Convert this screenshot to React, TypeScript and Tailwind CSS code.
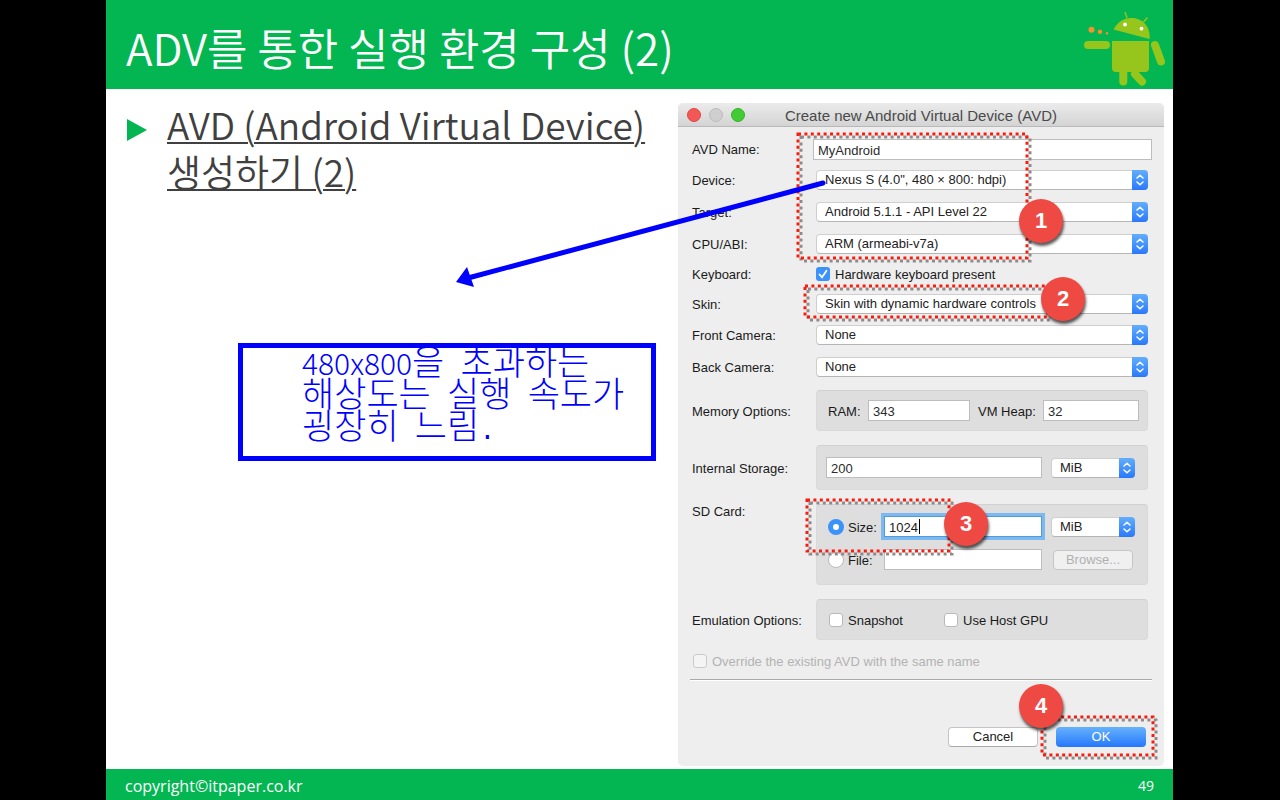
import { ReactNode } from 'react';

const field =
  'h-[21px] min-w-0 rounded-none border border-[#bdbcbe] bg-white px-1 pt-0.5 text-[13px] leading-4 text-[#2b2b2b] outline-none';

function Chevrons() {
  return (
    <span className="pointer-events-none col-start-1 row-start-1 flex h-5 w-4 items-center justify-center justify-self-end rounded-r-[4px] bg-linear-to-b from-[#62aefb] to-[#2a78fb]">
      <svg width="8" height="12" viewBox="0 0 8 12" fill="none" stroke="white" strokeWidth="1.5" strokeLinecap="round" strokeLinejoin="round">
        <path d="M1 4 4 1.2 7 4M1 8l3 2.8L7 8" />
      </svg>
    </span>
  );
}

function Select({ id, value, label, className = '' }: { id?: string; value: string; label?: string; className?: string }) {
  return (
    <span className={`grid grid-cols-1 ${className}`}>
      <select
        id={id}
        aria-label={label}
        className="col-start-1 row-start-1 h-5 w-full appearance-none rounded-[4px] border border-[#cfcfcf] border-b-[#b5b5b5] bg-white pl-2 text-[13px] leading-4 text-[#222] outline-none"
      >
        <option>{value}</option>
      </select>
      <Chevrons />
    </span>
  );
}

function SelectRow({ id, label, value, className = 'h-8' }: { id: string; label: string; value: string; className?: string }) {
  return (
    <div className={`grid grid-cols-[124px_minmax(0,1fr)] items-center ${className}`}>
      <label htmlFor={id} className="pt-0.5">{label}</label>
      <Select id={id} value={value} />
    </div>
  );
}

function PanelRow({ label, children, className }: { label: ReactNode; children: ReactNode; className: string }) {
  return (
    <div className="grid grid-cols-[124px_minmax(0,1fr)] items-center">
      <span className="pt-0.5">{label}</span>
      <div className={`flex items-center rounded-[4px] border border-[#dad8da] border-t-[#d2d0d2] bg-[#dedede] ${className}`}>{children}</div>
    </div>
  );
}

const box = 'size-[14px] shrink-0 appearance-none rounded-[3px] border border-[#b9b9b9] bg-white';

function Marker({ n, className }: { n: number; className: string }) {
  return (
    <span
      className={`absolute flex size-11 items-center justify-center rounded-full bg-[#ee4a43] text-[22px] font-bold text-white shadow-[1px_3px_3px_rgba(0,0,0,0.65)] ${className}`}
    >
      {n}
    </span>
  );
}

function Frames() {
  const frames = [
    'M120 31H349V155H120Z',
    'M127 183H370V214H127Z',
    'M129 397H271V448H129Z',
    'M364 614H475V652H364Z',
  ];
  return (
    <svg className="pointer-events-none absolute inset-0 size-full overflow-visible" fill="none" strokeWidth="3" strokeDasharray="3 3.4">
      {frames.map((d) => (
        <g key={d}>
          <path d={d} stroke="#8b8b8b" transform="translate(3 3)" />
          <path d={d} stroke="#fb1a0c" />
        </g>
      ))}
    </svg>
  );
}

function AvdDialog() {
  return (
    <form
      className="relative flex w-[486px] shrink-0 flex-col rounded-[5px] bg-[#eee] font-['Liberation_Sans',sans-serif] text-[13px] leading-4 text-[#1a1a1a]"
      onSubmit={(e) => e.preventDefault()}
    >
      <div className="flex h-6 shrink-0 items-center rounded-t-[5px] border-b border-[#b9b9b9] bg-linear-to-b from-[#ebebeb] to-[#d4d4d4] pl-[9px]">
        <div className="flex gap-2">
          <span className="size-[14px] rounded-full border border-[#df4744] bg-[#f25856]" />
          <span className="size-[14px] rounded-full border border-[#bdbdbd] bg-[#cfcfcf]" />
          <span className="size-[14px] rounded-full border border-[#38b22b] bg-[#43cb35]" />
        </div>
        <h2 className="flex-1 pt-0.5 pr-[67px] text-center text-[15px] text-[#4a4a4a]">Create new Android Virtual Device (AVD)</h2>
      </div>

      <div className="flex flex-1 flex-col pt-2 pr-4 pb-[19px] pl-[14px]">
        <div className="-mr-1 grid h-[29px] grid-cols-[121px_minmax(0,1fr)] items-center">
          <label htmlFor="name">AVD Name:</label>
          <input id="name" className={field} defaultValue="MyAndroid" />
        </div>
        <SelectRow id="device" label="Device:" value={'Nexus S (4.0", 480 × 800: hdpi)'} />
        <SelectRow id="target" label="Target:" value="Android 5.1.1 - API Level 22" />
        <SelectRow id="cpu" label="CPU/ABI:" value="ARM (armeabi-v7a)" />
        <div className="grid h-7 grid-cols-[124px_minmax(0,1fr)] items-center">
          <span className="pt-0.5">Keyboard:</span>
          <label className="flex items-center gap-[5px]">
            <span className="grid">
              <input type="checkbox" defaultChecked className="col-start-1 row-start-1 size-[14px] appearance-none rounded-[3px] bg-[#3b93fa]" />
              <svg className="pointer-events-none col-start-1 row-start-1" width="14" height="14" fill="none" stroke="white" strokeWidth="1.8" strokeLinecap="round">
                <path d="M3.5 7.5 6 10.2 10.5 3.8" />
              </svg>
            </span>
            <span className="pt-0.5">Hardware keyboard present</span>
          </label>
        </div>
        <SelectRow id="skin" label="Skin:" value="Skin with dynamic hardware controls" className="h-[31px]" />
        <SelectRow id="front" label="Front Camera:" value="None" />
        <SelectRow id="back" label="Back Camera:" value="None" />

        <div className="mt-[7px] flex flex-col gap-[14px]">
          <PanelRow label="Memory Options:" className="h-[41px] pr-2 pl-[11px]">
            <label htmlFor="ram" className="w-10 shrink-0 pt-0.5">RAM:</label>
            <input id="ram" className={`${field} w-[102px]`} defaultValue="343" />
            <label htmlFor="heap" className="w-[73px] shrink-0 pt-0.5 pl-2">VM Heap:</label>
            <input id="heap" className={`${field} flex-1`} defaultValue="32" />
          </PanelRow>
          <PanelRow label={<label htmlFor="storage">Internal Storage:</label>} className="h-[45px] gap-[9px] pr-3 pl-[9px]">
            <input id="storage" className={`${field} flex-1`} defaultValue="200" />
            <Select label="Storage unit" value="MiB" className="w-[84px]" />
          </PanelRow>
          <div className="grid grid-cols-[124px_minmax(0,1fr)]">
            <span>SD Card:</span>
            <div className="flex h-[81px] flex-col gap-3 rounded-[4px] border border-[#dad8da] border-t-[#d2d0d2] bg-[#dedede] pt-[11px] pr-3 pl-[11px]">
              <div className="flex items-center">
                <input type="radio" name="sd" id="size" defaultChecked className="size-4 shrink-0 appearance-none rounded-full border-[5px] border-[#3b93fa] bg-white" />
                <label htmlFor="size" className="w-10 shrink-0 pt-0.5 pl-1">Size:</label>
                <span className="flex min-w-0 flex-1 items-center border border-[#4f9be0] bg-white pl-1 ring-3 ring-[#7db9ef]">
                  <input aria-label="SD card size" className="h-[19px] w-[30px] bg-transparent pt-0.5 text-[13px] leading-4 outline-none" defaultValue="1024" />
                  <span className="h-[15px] w-px bg-black" />
                </span>
                <Select label="Size unit" value="MiB" className="ml-[9px] w-[84px] shrink-0" />
              </div>
              <div className="flex items-center">
                <input type="radio" name="sd" id="file" className="size-4 shrink-0 appearance-none rounded-full border border-[#bbb] bg-white" />
                <label htmlFor="file" className="w-10 shrink-0 pt-0.5 pl-1">File:</label>
                <input aria-label="SD card file" className={`${field} flex-1`} />
                <button type="button" disabled className="mr-0.5 ml-[11px] h-5 w-20 shrink-0 rounded-[4px] border border-[#c6c6c6] bg-[#f0f0f0] text-[#b0b0b0]">
                  Browse...
                </button>
              </div>
            </div>
          </div>
          <PanelRow label="Emulation Options:" className="h-[41px] pl-3">
            <label className="flex w-[115px] items-center gap-[5px]">
              <input type="checkbox" className={box} />
              <span className="pt-0.5">Snapshot</span>
            </label>
            <label className="flex items-center gap-[5px]">
              <input type="checkbox" className={box} />
              <span className="pt-0.5">Use Host GPU</span>
            </label>
          </PanelRow>
        </div>

        <label className="mt-3 flex items-center gap-[5px] pl-px text-[#b3b3b3]">
          <input type="checkbox" disabled className="size-[14px] appearance-none rounded-[3px] border border-[#cacaca] bg-[#f4f4f4]" />
          <span className="pt-0.5">Override the existing AVD with the same name</span>
        </label>
        <hr className="mt-[9px] -mr-1 -ml-0.5 h-0.5 border-t border-b border-t-[#aaa9ab] border-b-white" />
        <div className="mt-auto flex justify-end gap-[18px] pr-0.5">
          <button type="button" className="h-5 w-[90px] rounded-[4px] border border-[#c4c4c4] border-b-[#aaa] bg-white text-[#222]">Cancel</button>
          <button type="submit" className="h-5 w-[90px] rounded-[4px] bg-linear-to-b from-[#66b1fb] to-[#2677fc] text-white">OK</button>
        </div>
      </div>

      <Frames />
      <Marker n={1} className="top-24 left-[341px]" />
      <Marker n={2} className="top-[174px] left-[363px]" />
      <Marker n={3} className="top-[399px] left-[266px]" />
      <Marker n={4} className="top-[581px] left-[341px]" />
    </form>
  );
}

function Robot() {
  return (
    <svg className="self-end" width="84" height="79" viewBox="1083 10 84 79" fill="#96c61c" aria-hidden="true">
      <path d="M1125 12l2 6M1147.500 17.500l-4 4.500" stroke="#96c61c" strokeWidth="1.400" />
      <path d="M1113.500 29.500C1118 21 1126 16.500 1136 18.500C1145.500 21 1150.500 29 1149.500 39Z" />
      <circle cx="1125" cy="24.500" r="1.900" fill="white" />
      <circle cx="1141.500" cy="28.700" r="1.900" fill="white" />
      <path d="M1112 41H1149V68a4 4 0 0 1-4 4H1116a4 4 0 0 1-4-4Z" />
      <path d="M1088 45H1106M1155 45L1161 61.500M1123.300 71V81.500M1135 74L1142 81.500" stroke="#96c61c" strokeWidth="8" strokeLinecap="round" />
      <circle cx="1091.500" cy="29.700" r="3" fill="#f7902f" />
      <circle cx="1100" cy="31.700" r="2.200" fill="#f7902f" />
      <circle cx="1107" cy="33.300" r="1.200" fill="#f7902f" />
    </svg>
  );
}

function Ko({ children }: { children: ReactNode }) {
  return <span className="font-['Noto_Sans_CJK_KR',sans-serif] text-[35px] leading-4">{children}</span>;
}

export default function App() {
  return (
    <div className="min-h-screen bg-black pr-[107px] pl-[106px] font-['Noto_Sans_CJK_KR',sans-serif]">
      <div className="flex min-h-screen flex-col bg-white">
        <header className="flex h-[89px] items-center justify-between bg-[#03b652] pr-1.5 pl-5">
          <h1 className="pt-1 text-[44px] leading-none font-[350] text-white">ADV를 통한 실행 환경 구성 (2)</h1>
          <Robot />
        </header>

        <main className="relative flex flex-1 justify-between pt-3 pr-[9px] pb-[3px]">
          <section className="flex min-w-0 flex-1 flex-col">
            <ul>
              <li className="flex gap-5 pl-[21px] text-[37px] leading-[47px] font-[350] text-[#404040]">
                <svg className="mt-[18px] shrink-0" width="20" height="22" fill="#03b652" aria-hidden="true">
                  <path d="M0 0 20 11 0 22Z" />
                </svg>
                <span className="whitespace-nowrap underline decoration-2 underline-offset-2">
                  AVD (Android Virtual Device)
                  <br />
                  생성하기 (2)
                </span>
              </li>
            </ul>
            <p className="mt-[148px] mr-[22px] ml-[132px] h-[118px] border-[5px] border-[#00f] pt-1 pl-[59px] font-['Liberation_Mono','Noto_Sans_CJK_KR',monospace] text-[27px] leading-8 font-light text-[#00f]">
              <span className="font-['Noto_Sans_CJK_KR',sans-serif] text-[30px] leading-4">480x800</span><Ko>을</Ko> <Ko>초과하는</Ko>
              <br />
              <Ko>해상도는</Ko> <Ko>실행</Ko> <Ko>속도가</Ko>
              <br />
              <Ko>굉장히</Ko> <Ko>느림</Ko>.
            </p>
          </section>
          <div className="flex pt-0.5">
            <AvdDialog />
          </div>
          <svg className="pointer-events-none absolute top-[90px] left-[346px]" width="376" height="112" fill="#00f" aria-hidden="true">
            <path d="M371 4 16 99" stroke="#00f" strokeWidth="5" strokeLinecap="round" />
            <path d="M4 103 15 88 22 108Z" />
          </svg>
        </main>

        <footer className="flex h-[31px] items-center justify-between bg-[#03b652] px-[19px] pt-0.5 font-['Open_Sans',sans-serif] text-[16px] leading-none text-white">
          <span>copyright©itpaper.co.kr</span>
          <span className="text-[14px]">49</span>
        </footer>
      </div>
    </div>
  );
}
